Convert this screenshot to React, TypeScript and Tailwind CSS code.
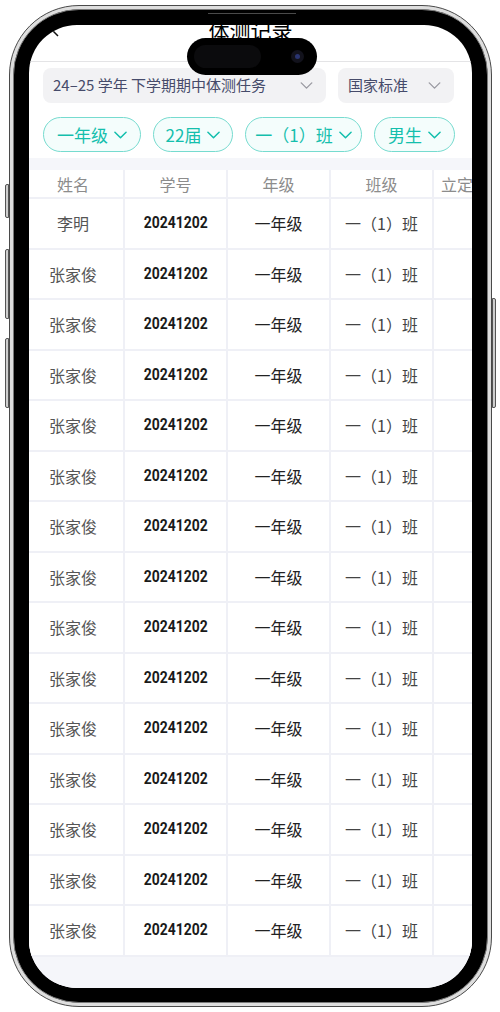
import React from "react";

const names = ["李明", ...Array(14).fill("张家俊")];

const cjk = "font-['Noto_Sans_CJK_SC','Noto_Sans',sans-serif]";

function Chevron({ className }: { className: string }) {
  return (
    <svg viewBox="0 0 14 8" fill="none" className={className}>
      <path d="M1 1l6 6 6-6" stroke="currentColor" strokeWidth="1.6" strokeLinecap="round" strokeLinejoin="round" />
    </svg>
  );
}

const pills = [
  { label: "一年级", w: "w-[98px]" },
  { label: "22届", w: "w-[80px]" },
  { label: "一（1）班", w: "w-[117px]" },
  { label: "男生", w: "w-[81px]" },
];

export default function App() {
  return (
    <div className="w-[500px] h-[1012px] bg-white pt-[5px] pl-[9px]">
      {/* phone body */}
      <div className="relative w-[483px] h-[1002px] rounded-[70px] border border-[#4a4a4a] bg-[#dedede] p-[3px]">
        {/* side buttons */}
        <div className="absolute -left-[5px] top-[178px] w-[4px] h-[34px] rounded-l-[2px] border border-[#555] bg-[#cfcfcf]" />
        <div className="absolute -left-[5px] top-[243px] w-[4px] h-[70px] rounded-l-[2px] border border-[#555] bg-[#cfcfcf]" />
        <div className="absolute -left-[5px] top-[332px] w-[4px] h-[70px] rounded-l-[2px] border border-[#555] bg-[#cfcfcf]" />
        <div className="absolute -right-[5px] top-[292px] w-[4px] h-[110px] rounded-r-[2px] border border-[#555] bg-[#cfcfcf]" />

        <div className="w-full h-full rounded-[66px] bg-black border border-[#7a7a7a] pt-[15px] pb-[14px] px-[15px]">
          {/* screen */}
          <div className={`relative w-[443px] h-[963px] rounded-[48px] overflow-hidden bg-white flex flex-col ${cjk}`}>
            {/* nav header */}
            <div className="relative h-[37px] shrink-0 border-b border-[#e4e4e6] flex justify-center">
              <svg viewBox="0 0 9 18" className="absolute left-[21px] -top-[4px] w-[9px] h-[18px]" fill="none">
                <path d="M8 1L1 8l7 7" stroke="#111" strokeWidth="1.5" />
              </svg>
              <div className="-mt-[5px] text-[21px] leading-[21px] text-black">体测记录</div>
            </div>

            {/* filters */}
            <div className="pl-[14px] pt-[6px] shrink-0">
              <div className="flex gap-[12px]">
                <div className="w-[283px] h-[35px] rounded-[8px] bg-[#f2f2f4] flex items-center justify-between pl-[10px] pr-[13px]">
                  <span className="text-[15px] text-[#464b6a]">24–25 学年 下学期期中体测任务</span>
                  <Chevron className="w-[13px] h-[7px] text-[#9a9aa2]" />
                </div>
                <div className="w-[116px] h-[35px] rounded-[8px] bg-[#f2f2f4] flex items-center justify-between pl-[10px] pr-[13px]">
                  <span className="text-[15px] text-[#464b6a]">国家标准</span>
                  <Chevron className="w-[13px] h-[7px] text-[#9a9aa2]" />
                </div>
              </div>
              <div className="flex gap-[12px] mt-[14px]">
                {pills.map((p) => (
                  <div
                    key={p.label}
                    className={`${p.w} h-[35px] rounded-full border border-[#76dbcf] bg-[#f4fdfc] flex items-center justify-center gap-[6px] text-[17px] text-[#14bfad]`}
                  >
                    <span>{p.label}</span>
                    <Chevron className="w-[13px] h-[8px] text-[#14bfad]" />
                  </div>
                ))}
              </div>
            </div>

            {/* table */}
            <div className="flex-1 mt-[6px] bg-[#f5f6fa] pt-[12px]">
              <div className="-ml-[6px] w-[520px] bg-white">
                <div className="grid grid-cols-[102px_103px_103px_103px_109px] h-[29px] border-b-2 border-[#eff0f6] text-[16px] text-[#8c8c8c]">
                  <div className="flex items-center justify-center border-r-2 border-[#eff0f6]">姓名</div>
                  <div className="flex items-center justify-center border-r-2 border-[#eff0f6]">学号</div>
                  <div className="flex items-center justify-center border-r-2 border-[#eff0f6]">年级</div>
                  <div className="flex items-center justify-center border-r-2 border-[#eff0f6]">班级</div>
                  <div className="flex items-center pl-[7px] whitespace-nowrap">立定跳远</div>
                </div>
                {names.map((n, i) => (
                  <div
                    key={i}
                    className="grid grid-cols-[102px_103px_103px_103px_109px] h-[50.5px] border-b-2 border-[#eff0f6] text-[16px]"
                  >
                    <div className="flex items-center justify-center border-r-2 border-[#eff0f6] text-[#555]">{n}</div>
                    <div className="flex items-center justify-center border-r-2 border-[#eff0f6]">
                      <span className="inline-block scale-x-[0.87] font-['Roboto',sans-serif] font-bold text-[16px] text-[#1a1a1a]">
                        20241202
                      </span>
                    </div>
                    <div className="flex items-center justify-center border-r-2 border-[#eff0f6] text-[#222]">一年级</div>
                    <div className="flex items-center justify-center border-r-2 border-[#eff0f6] text-[#444]">一（1）班</div>
                    <div />
                  </div>
                ))}
              </div>
            </div>
          </div>
        </div>

        {/* speaker slit */}
        <div className="absolute left-[198px] top-[7px] w-[88px] h-[1px] bg-[#4a4a4a]" />

        {/* dynamic island */}
        <div className="absolute left-[177px] top-[32px] w-[130px] h-[37px] rounded-full bg-black">
          <div className="absolute left-[7px] top-[7px] w-[67px] h-[23px] rounded-full bg-[#0b0b0d]" />
          <div className="absolute left-[104px] top-[12px] w-[13px] h-[13px] rounded-full bg-[#12121c] flex items-center justify-center">
            <div className="w-[5px] h-[5px] rounded-full bg-[#2a3470]" />
          </div>
        </div>
      </div>
    </div>
  );
}
